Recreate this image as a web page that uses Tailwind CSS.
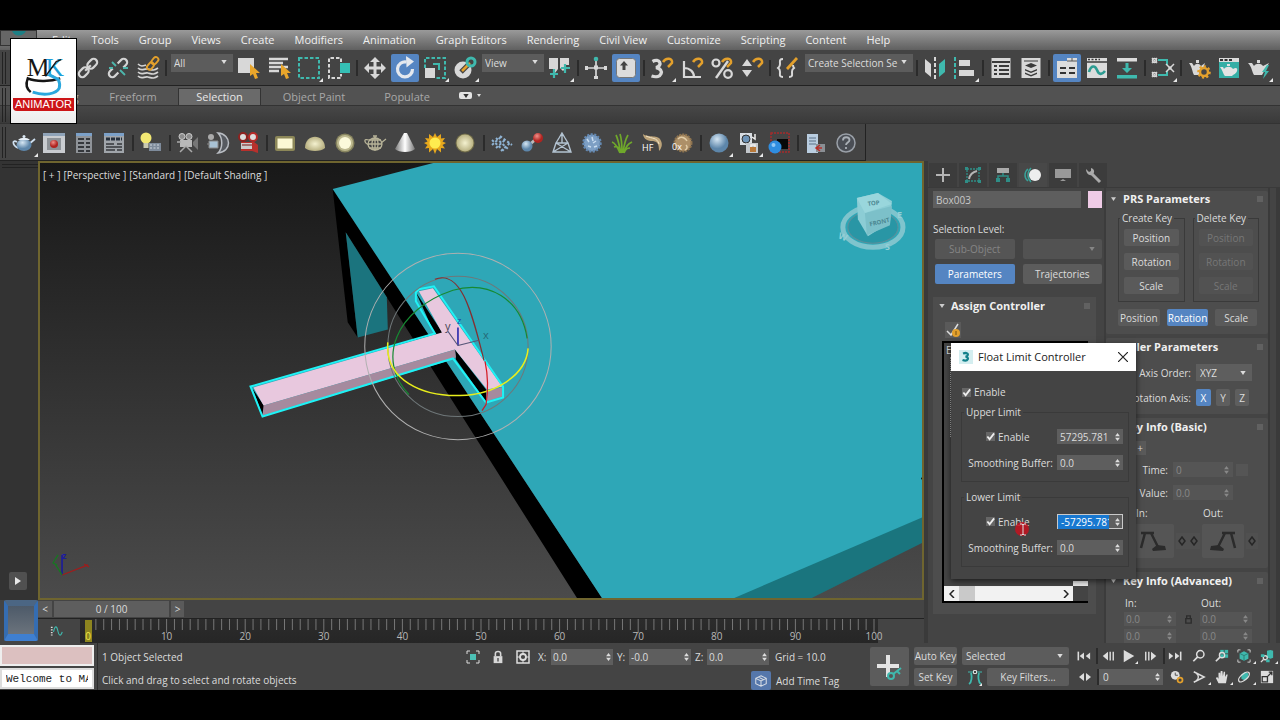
<!DOCTYPE html>
<html lang="en">
<head>
    <meta charset="UTF-8">
    <meta name="viewport" content="width=device-width, initial-scale=1.0">
    <title>Float Limit Controller</title>
    <script src="https://cdn.jsdelivr.net/npm/@tailwindcss/browser@4"></script>
</head>
<body class="bg-black">

<!-- Icon sprite -->
<svg class="absolute size-0" aria-hidden="true">
    <defs>
        <linearGradient id="sky" x1="0" y1="0" x2="0" y2="1"><stop offset="0" stop-color="#181818"/><stop offset="1" stop-color="#4b4b4b"/></linearGradient>
        <radialGradient id="blueBall" cx=".4" cy=".3"><stop offset="0" stop-color="#d5e6f3"/><stop offset="1" stop-color="#5d86aa"/></radialGradient>
        <radialGradient id="creamBall"><stop offset="0" stop-color="#f4f1cf"/><stop offset="1" stop-color="#b9b283"/></radialGradient>
        <radialGradient id="redBall" cx=".4" cy=".3"><stop offset="0" stop-color="#f0908a"/><stop offset="1" stop-color="#b02420"/></radialGradient>
        <linearGradient id="cone"><stop offset="0" stop-color="#777"/><stop offset=".5" stop-color="#fff"/><stop offset="1" stop-color="#777"/></linearGradient>
    </defs>

    <symbol id="corner" viewBox="0 0 4 4"><path d="M4 0v4H0z" fill="#e8e8e8"/></symbol>
    <symbol id="caret" viewBox="0 0 8 6"><path d="M0 0h8L4 6z" fill="currentColor"/></symbol>
    <symbol id="spin" viewBox="0 0 6 10"><path d="M0 4l3-4 3 4zM0 6l3 4 3-4z" fill="currentColor"/></symbol>
    <symbol id="tick" viewBox="0 0 10 10"><path d="M1.500 5l2.500 3L9 1.500" fill="none" stroke="#eee" stroke-width="2"/></symbol>
    <symbol id="grip" viewBox="0 0 6 6"><path d="M0 1h6M0 3h6M0 5h6" stroke="#777" stroke-width="1"/></symbol>

    <!-- main toolbar -->
    <symbol id="link" viewBox="0 0 28 28"><g transform="rotate(-45 14 14)" fill="none" stroke="#d4d4d4" stroke-width="2.200"><rect x="2.500" y="10.500" width="11" height="7" rx="3.500"/><rect x="14.500" y="10.500" width="11" height="7" rx="3.500"/><path d="M10 14h8"/></g></symbol>
    <symbol id="unlink" viewBox="0 0 28 28"><g transform="rotate(-45 14 14)" fill="none" stroke="#d4d4d4" stroke-width="2.200"><path d="M10 10.500H6a3.500 3.500 0 0 0 0 7h5M17 10.500h5a3.500 3.500 0 0 1 0 7h-4"/></g><path d="M8 8l4 4M16 16l5 5M5 14h4M19 14h5" stroke="#4db6ac" stroke-width="1.800"/></symbol>
    <symbol id="bind" viewBox="0 0 28 28"><path d="M4 14c4 4 6 0 10 1s6 2 10-1M4 18c4 4 6 0 10 1s6 2 10-1M4 22c4 4 6 0 10 1s6 2 10-1M4 10c3 3 5 2 8 1" fill="none" stroke="#d4d4d4" stroke-width="1.700"/><g transform="rotate(-50 19 9)" fill="none" stroke="#e3a02c" stroke-width="1.900"><rect x="11" y="6.500" width="8" height="5" rx="2.500"/><rect x="18" y="6.500" width="8" height="5" rx="2.500"/></g></symbol>
    <symbol id="pick" viewBox="0 0 28 28"><path d="M3 4h16v15H3z" fill="#d8d8d8"/><path d="M15 10v12l3-2 2 5 3-1-2-5h4z" fill="#e9a62b"/></symbol>
    <symbol id="pickname" viewBox="0 0 28 28"><path d="M4 5h19M4 9h14M4 13h19M4 17h10" stroke="#d8d8d8" stroke-width="2.500"/><path d="M16 10v12l3-2 2 5 3-1-2-5h4z" fill="#e9a62b"/></symbol>
    <symbol id="region" viewBox="0 0 28 28"><path d="M4 4h20v20H4z" fill="none" stroke="#3fb9ae" stroke-width="2" stroke-dasharray="3.500 2"/></symbol>
    <symbol id="crossing" viewBox="0 0 28 28"><path d="M16 8V4H4v20h12v-4" fill="none" stroke="#d8d8d8" stroke-width="2" stroke-dasharray="3.500 2"/><path d="M15 9h10v10H15z" fill="#35bfb5"/></symbol>
    <symbol id="move" viewBox="0 0 28 28"><path d="M14 3l5 5h-3.500v4.500H20V9l5 5-5 5v-3.500h-4.500V20H19l-5 5-5-5h3.500v-4.500H8V19l-5-5 5-5v3.500h4.500V8H9z" fill="#d8d8d8"/></symbol>
    <symbol id="rotate" viewBox="0 0 28 28"><path d="M21.500 15a7.500 7.500 0 1 1-6-7" fill="none" stroke="#e4e8ee" stroke-width="3.200"/><path d="M15 2l8 5.500-7.500 6z" fill="#e4e8ee"/></symbol>
    <symbol id="scale" viewBox="0 0 28 28"><path d="M4 14V4h20v20H14" fill="none" stroke="#3fb9ae" stroke-width="2" stroke-dasharray="3.500 2"/><path d="M4 14h10v10H4z" fill="#d8d8d8"/><path d="M12 10h6v6" fill="none" stroke="#3fb9ae" stroke-width="2"/></symbol>
    <symbol id="place" viewBox="0 0 28 28"><circle cx="12" cy="16" r="8.500" fill="#d8d8d8"/><path d="M10 18l9-9" stroke="#444" stroke-width="5"/><path d="M11 17l8-8" stroke="#e3a02c" stroke-width="2.500"/><circle cx="20" cy="8" r="4" fill="none" stroke="#3fb9ae" stroke-width="3"/></symbol>
    <symbol id="pivot" viewBox="0 0 28 28"><path d="M3 4h9v11l-3 4-2-4H3zM14 4h9v7h-4v4l-2 2-3-3z" fill="#d8d8d8"/><path d="M8 15v9M4 20h8M19 10v9M15 14h9" stroke="#3fb9ae" stroke-width="2.200"/></symbol>
    <symbol id="manip" viewBox="0 0 28 28"><path d="M14 4v20M4 14h20" stroke="#d8d8d8" stroke-width="1.700"/><path d="M12 11.500h4v4h-4zM3 12h3v4H3zM22 12h3v4h-3zM12 22h4v3h-4z" fill="#d8d8d8"/><circle cx="14" cy="5" r="2.300" fill="#3fb9ae"/></symbol>
    <symbol id="keyb" viewBox="0 0 28 28"><rect x="4.500" y="4.500" width="19" height="19" rx="3" fill="#dcdcdc" stroke="#777"/><path d="M12 7l4 4.500h-2.500V16h-3v-4.500H8z" fill="#444"/></symbol>
    <symbol id="snap3" viewBox="0 0 28 28"><path d="M4.500 7.500c7-4 11 4 3.500 6 9 1.500 6 12-4.500 8.500" fill="none" stroke="#d8d8d8" stroke-width="3.300"/><path d="M15 8c3-5 10-4 9 1l-4 4" fill="none" stroke="#e3a02c" stroke-width="2.500"/></symbol>
    <symbol id="snapangle" viewBox="0 0 28 28"><path d="M6 7v16h17M6 14c6 0 10 4 10 9" fill="none" stroke="#d8d8d8" stroke-width="2.200"/><path d="M15 8c3-5 10-4 9 1l-4 4" fill="none" stroke="#e3a02c" stroke-width="2.500"/></symbol>
    <symbol id="snappct" viewBox="0 0 28 28"><circle cx="8" cy="9" r="3.500" fill="none" stroke="#d8d8d8" stroke-width="2.200"/><circle cx="20" cy="20" r="3.800" fill="none" stroke="#d8d8d8" stroke-width="2.200"/><path d="M20 7L8 24" stroke="#d8d8d8" stroke-width="2.400"/><path d="M14 8c3-5 10-4 9 1l-4 4" fill="none" stroke="#e3a02c" stroke-width="2.500"/></symbol>
    <symbol id="snapspin" viewBox="0 0 28 28"><path d="M4 12l5-7 5 7zM4 16h10l-5 7z" fill="#d8d8d8"/><path d="M15 8c3-5 10-4 9 1l-4 4" fill="none" stroke="#e3a02c" stroke-width="2.500"/></symbol>
    <symbol id="sets" viewBox="0 0 28 28"><path d="M9 5c-4 0-3 2-3 5s-1 3-2 4c1 1 2 1 2 4s-1 5 3 5M15 23c4 0 3-2 3-5s1-3 2-4c-1-1-1-1-1-3" fill="none" stroke="#d8d8d8" stroke-width="2"/><path d="M13 15l10-11" stroke="#e3a02c" stroke-width="2.800"/></symbol>
    <symbol id="mirror" viewBox="0 0 28 28"><path d="M4 5l6 5v13l-6-5z" fill="#d8d8d8"/><path d="M24 5l-6 5v13l6-5z" fill="#3fb9ae"/><path d="M14 3v22" stroke="#d8d8d8" stroke-width="2" stroke-dasharray="4 2"/></symbol>
    <symbol id="align" viewBox="0 0 28 28"><path d="M4 3v22" stroke="#3fb9ae" stroke-width="2" stroke-dasharray="4 2"/><path d="M8 6h11v6H8zM8 16h15v6H8z" fill="#d8d8d8"/></symbol>
    <symbol id="explorer" viewBox="0 0 28 28"><path d="M4.500 4h19v20h-19z" fill="#d8d8d8"/><path d="M5 8h18M7 12h3M12 12h10M7 16h3M12 16h10M7 20h3M12 20h10" stroke="#3a3a3a" stroke-width="1.800"/></symbol>
    <symbol id="layers" viewBox="0 0 28 28"><path d="M4.500 4h19v20h-19z" fill="#d8d8d8"/><path d="M7 7h14" stroke="#3a3a3a"/><path d="M14 9l6 2.500-6 2.500-6-2.500zM8 15l6 2.500 6-2.500v1.500L14 19l-6-2.500zM8 18.500l6 2.500 6-2.500V20l-6 2.500L8 20z" fill="#3a3a3a"/></symbol>
    <symbol id="ribbon" viewBox="0 0 28 28"><path d="M4 7h10V4h10v20H4z" fill="#dcdcdc"/><path d="M14 7h10M19 4v3" stroke="#555"/><path d="M7 14h6M16 14h6M7 19h6M16 19h6" stroke="#333" stroke-width="2"/></symbol>
    <symbol id="curve" viewBox="0 0 28 28"><path d="M4 4h20v20H4z" fill="#dcdcdc"/><path d="M4 8h20" stroke="#3a3a3a" stroke-width="1.500"/><path d="M5 5.500h12" stroke="#3a3a3a" stroke-width="1.500" stroke-dasharray="2 1.500"/><path d="M6 18c2-7 6-7 8-2s5 5 8 1" fill="none" stroke="#2d9c92" stroke-width="2.600"/></symbol>
    <symbol id="dope" viewBox="0 0 28 28"><path d="M4 4h20v3.500H4z" fill="#dcdcdc"/><path d="M4 21h20v3.500H4zM12.500 9h3v5H19l-5 5-5-5h3.500z" fill="#3fb9ae"/></symbol>
    <symbol id="schem" viewBox="0 0 28 28"><path d="M9 6h9v5M9 21h9v-4" fill="none" stroke="#3fb9ae" stroke-width="2"/><g fill="none" stroke="#d8d8d8" stroke-width="1.500"><path d="M3 4l5 5M8 4L3 9M3 18l5 5M8 18l-5 5" stroke-dasharray="2 1"/><circle cx="5.500" cy="6.500" r="2"/><circle cx="5.500" cy="20.500" r="2"/><path d="M17 10l8 8M25 10l-8 8"/></g><path d="M19.500 12.500h3v3h-3z" fill="#d8d8d8"/></symbol>
    <symbol id="rset" viewBox="0 0 28 28"><path d="M4 9h3l2 3c2-3 5-3 7 0l4-3-4 12H9c-2-3-1-6-5-12zM11 6h3v3h-3z" fill="#d8d8d8"/><circle cx="19" cy="18" r="4" fill="#444" stroke="#e3a02c" stroke-width="2.500"/><circle cx="19" cy="18" r="5.800" fill="none" stroke="#e3a02c" stroke-width="2" stroke-dasharray="2.200 2.200"/></symbol>
    <symbol id="rframe" viewBox="0 0 28 28"><path d="M4 4h20v20H4z" fill="#35aea5"/><path d="M4 4h20v4H4z" fill="#dcdcdc"/><path d="M5 6h12" stroke="#333" stroke-width="2" stroke-dasharray="3 1.500"/><path d="M5 13h3l1 2c2-3 7-3 9 0 3-2 5-1 4 2s-3 3-5 5h-7c-2-2-2-5-5-9zM12 10h3v2h-3z" fill="#e3e3e3"/></symbol>
    <symbol id="rprod" viewBox="0 0 28 28"><path d="M3 9h4l2 3c2-3 7-3 9 0l6-3-7 12H9C7 18 7 13 3 9zM12 6h3v3h-3z" fill="#d8d8d8"/><path d="M22 11l-5 7h3l-2 7 6-8h-3l3-6z" fill="#3fb9ae"/></symbol>

    <!-- second toolbar -->
    <symbol id="teapot" viewBox="0 0 28 28"><path d="M7 13c-5-3-5 3 1 6M19 15l6-5" fill="none" stroke="#cfe0f0" stroke-width="1.800"/><ellipse cx="14" cy="16" rx="7.500" ry="6" fill="url(#blueBall)"/><path d="M8 11c3-3 9-3 12 0z" fill="#e8f0f7"/><circle cx="14" cy="7.500" r="1.500" fill="#dce8f3"/></symbol>
    <symbol id="rwin" viewBox="0 0 28 28"><path d="M3 4h22v20H3z" fill="#c9ccd0"/><path d="M3 4h22v3H3z" fill="#8fa3b8"/><path d="M7 9h14v12H7z" fill="#8d9297"/><circle cx="14" cy="15" r="4" fill="url(#redBall)"/></symbol>
    <symbol id="panel1" viewBox="0 0 28 28"><path d="M6 4h16v20H6z" fill="#8f9398"/><path d="M6 4h16v3H6z" fill="#7ba0c8"/><path d="M8 10h6M8 14h6M8 18h6M8 22h6M16 10h4M16 14h4M16 18h4M16 22h4" stroke="#34373b" stroke-width="1.800"/></symbol>
    <symbol id="panel2" viewBox="0 0 28 28"><path d="M4 4h20v20H4z" fill="#a0a5aa"/><path d="M4 4h20v3H4z" fill="#7ba0c8"/><path d="M6 10h16" stroke="#26303c" stroke-width="3" stroke-dasharray="4 1"/><path d="M6 15h8M6 18h16M6 21h9M17 15h5M17 21h5" stroke="#34373b" stroke-width="1.500"/></symbol>
    <symbol id="bulb" viewBox="0 0 28 28"><circle cx="9" cy="9" r="5.500" fill="#f2e873"/><path d="M6.500 14h5v5h-5z" fill="#c9c9b0"/><path d="M12 14h12v8H12z" fill="#7e8b9b"/><path d="M13 16h10M13 19h10" stroke="#cfd6de" stroke-dasharray="2 1.500"/></symbol>
    <symbol id="camera" viewBox="0 0 28 28"><g fill="#8c8c8c" stroke="#ccc"><circle cx="8" cy="7.500" r="3"/><circle cx="15" cy="7.500" r="3"/></g><path d="M6 11h12v7H6z" fill="#b9b9b9"/><path d="M19 13l5-5v13l-5-5z" fill="#777"/><path d="M12 17l-6 6M12 17l6 6M3 13h4" stroke="#aaa" stroke-width="1.500"/></symbol>
    <symbol id="halfcam" viewBox="0 0 28 28"><circle cx="7" cy="8" r="3" fill="#aaa"/><path d="M5 12h9v7H5zM3 15h3" fill="#a9c2d4" stroke="#888"/><path d="M14 4c14 1 14 19 0 20 5-5 5-15 0-20z" fill="#565a60" stroke="#b9bdc3" stroke-width="1.500"/></symbol>
    <symbol id="redcam" viewBox="0 0 28 28"><circle cx="9" cy="8" r="4" fill="#ddd" stroke="#8f2220" stroke-width="2"/><circle cx="19" cy="8" r="4" fill="#ddd" stroke="#b52a28" stroke-width="2"/><path d="M7 13h13l4 3v8l-6-2H7z" fill="#b8302c"/><path d="M7 14h11v6H7z" fill="#ccc"/><path d="M8 16h10" stroke="#7a1513"/></symbol>
    <symbol id="lrect" viewBox="0 0 28 28"><rect x="4" y="7" width="20" height="15" rx="2" fill="#8c8758"/><rect x="6.500" y="9.500" width="15" height="10" fill="#fbf8d4"/></symbol>
    <symbol id="ldome" viewBox="0 0 28 28"><path d="M4 19C4 4 24 4 24 19c-4 4-16 4-20 0z" fill="url(#creamBall)"/></symbol>
    <symbol id="lball" viewBox="0 0 28 28"><circle cx="14" cy="14" r="9.500" fill="#87845f"/><circle cx="14" cy="14" r="8" fill="#bdb98f"/><circle cx="14" cy="14" r="6" fill="#fcfadb"/></symbol>
    <symbol id="mesh" viewBox="0 0 28 28"><g fill="none" stroke="#b7b398" stroke-width="1.300"><ellipse cx="14" cy="15" rx="7" ry="6"/><ellipse cx="14" cy="15" rx="3" ry="6"/><path d="M14 7v14M7 15h14M8 11h12M8 19h12M8 11c-6-2-5 3 0 5M20 14l5-4M12 7h4"/></g></symbol>
    <symbol id="lcone" viewBox="0 0 28 28"><path d="M13 4h3l8 16c-4 4-16 4-20 0z" fill="url(#cone)"/></symbol>
    <symbol id="sun" viewBox="0 0 28 28"><path d="M14 4l2 4 4-3v4.500l4-.5-2.500 3.500L25 14l-3.500 2 2.500 3.500-4-.5v4.500L16 20l-2 5-2-5-4 3.500V19l-4 .5L6.500 16 3 14l3.500-1.500L4 9l4 .5V5l4 3z" fill="#e7a81d"/><circle cx="14" cy="14" r="5.500" fill="#ffec4f"/></symbol>
    <symbol id="cream" viewBox="0 0 28 28"><circle cx="14" cy="14" r="9.500" fill="#6e6a48"/><circle cx="14" cy="14" r="8.500" fill="url(#creamBall)"/></symbol>
    <symbol id="scatter" viewBox="0 0 28 28"><path d="M4 11l12 11M8 9l12 11M12 7l12 9M4 16l10-9M8 19l10-9M13 22l10-9" stroke="#8fb3d3" stroke-width="2" stroke-dasharray="2.500 2"/></symbol>
    <symbol id="atoms" viewBox="0 0 28 28"><path d="M9 18l10-9" stroke="#bbb" stroke-width="3"/><circle cx="9" cy="17" r="5.500" fill="url(#blueBall)"/><circle cx="20" cy="9" r="5" fill="url(#redBall)"/></symbol>
    <symbol id="pyramid" viewBox="0 0 28 28"><path d="M5 23h18L20 14H8zM14 4L8 14M14 4l6 10M14 4v10M5 23l15-9M23 23L8 14M11 9l3-5 3 5" fill="none" stroke="#b3c3d1" stroke-width="1.400"/></symbol>
    <symbol id="fuzz" viewBox="0 0 28 28"><circle cx="14" cy="14" r="8.500" fill="#7d9fc4" stroke="#6489b2" stroke-width="2.500" stroke-dasharray="2 1.500"/><path d="M9 10l2 3M14 8l1 4M18 12l-3 2M10 17l3 1M16 18l3-1" stroke="#c8dcf0" stroke-width="1.500"/></symbol>
    <symbol id="grass" viewBox="0 0 28 28"><path d="M12 24C9 17 7 14 4 13M13 24C11 15 10 10 8 6M14 24c0-9 0-13-2-19M15 24c1-8 2-13 5-18M16 24c2-7 4-9 8-11M14 24c-2-5-5-7-8-6M16 24c2-5 4-5 6-5" fill="none" stroke="#6fa82b" stroke-width="1.700"/></symbol>
    <symbol id="hair" viewBox="0 0 28 28"><path d="M5 5c5 4 16 0 18 7 2 4 0 8-2 10 0-8-2-10-8-10C8 12 5 8 5 5z" fill="#bda47a"/><path d="M8 7c6 3 11 1 13 8" fill="none" stroke="#f1e3c5"/><text x="4" y="22" font-family="Open Sans" font-size="9" fill="#fff">HF</text></symbol>
    <symbol id="fur" viewBox="0 0 28 28"><circle cx="15" cy="14" r="8.500" fill="#ad9068" stroke="#8d734f" stroke-width="2" stroke-dasharray="2 1"/><path d="M10 10c4-4 8 0 9 2M18 16c2 2 1 4-1 5" fill="none" stroke="#e2cda7" stroke-width="1.500"/><text x="4" y="21" font-family="Open Sans" font-size="9" fill="#fff">0x</text></symbol>
    <symbol id="ball" viewBox="0 0 28 28"><circle cx="14" cy="14" r="9.500" fill="url(#blueBall)"/></symbol>
    <symbol id="locks" viewBox="0 0 28 28"><path d="M5 4h12v12H5z" fill="#d8dde2"/><circle cx="11" cy="10" r="4" fill="#6d93b7" stroke="#333"/><path d="M11 14h12v10H11z" fill="#c3c7cb"/><path d="M15 18h6v5h-6z" fill="#b8793a"/><path d="M20 5v5l-3-2M16 18v-2h4v2" fill="none" stroke="#eee" stroke-width="1.500"/></symbol>
    <symbol id="proxy" viewBox="0 0 28 28"><path d="M12 10h11v10H12z" fill="#080808"/><path d="M6 4h18v19H6z" fill="none" stroke="#a52b2b" stroke-width="1.500" stroke-dasharray="2 1"/><circle cx="10" cy="18" r="6.500" fill="#2f8de0"/><circle cx="8.500" cy="16" r="2" fill="#8ec6f5"/></symbol>
    <symbol id="doc" viewBox="0 0 28 28"><path d="M5 5h11v19H5z" fill="#b9cde0"/><path d="M7 9h7M7 12h7M7 15h7" stroke="#5b7188"/><path d="M14 15h9v8h-9z" fill="#8a8f94"/><path d="M14 19h6M18 16l-4 3 4 3" fill="none" stroke="#b5302c" stroke-width="1.500"/></symbol>
    <symbol id="help" viewBox="0 0 28 28"><circle cx="14" cy="14" r="9" fill="#4a4e55" stroke="#9aa0a8" stroke-width="1.500"/><path d="M11 11.500c0-4.500 6.500-4 6.500-.5 0 2.500-3.500 2.500-3.500 5M14 18v2" fill="none" stroke="#a9afb6" stroke-width="1.800"/></symbol>

    <!-- command panel tabs -->
    <symbol id="t-plus" viewBox="0 0 20 20"><path d="M10 3v14M3 10h14" stroke="#b5b5b5" stroke-width="2"/></symbol>
    <symbol id="t-mod" viewBox="0 0 20 20"><path d="M4 4h12v12H4z" fill="none" stroke="#2f8e87" stroke-width="1.300" stroke-dasharray="2 1"/><path d="M2 2h3v3H2zM15 2h3v3h-3zM2 15h3v3H2zM15 15h3v3h-3z" fill="#2f8e87"/><path d="M6 14c1-5 4-7 8-8" fill="none" stroke="#b5b5b5" stroke-width="2"/></symbol>
    <symbol id="t-hier" viewBox="0 0 20 20"><path d="M4 3h12v5H4z" fill="#aaa"/><path d="M10 8v3M5 14v-3h10v3" fill="none" stroke="#2f8e87" stroke-width="1.500"/><path d="M3 13h4v4H3zM13 13h4v4h-4z" fill="#2f8e87"/></symbol>
    <symbol id="t-motion" viewBox="0 0 20 20"><path d="M5 4c-4 3-4 9 0 12M8 3c-4 4-4 10 0 14" fill="none" stroke="#39a198" stroke-width="1.500"/><circle cx="12" cy="10" r="6" fill="#eee"/></symbol>
    <symbol id="t-disp" viewBox="0 0 20 20"><path d="M2 4h16v9H2zM7 16h6l-3-2z" fill="#999"/></symbol>
    <symbol id="t-util" viewBox="0 0 20 20"><path d="M9 9l8 8" stroke="#aaa" stroke-width="3"/><path d="M3 4l3 3 2-1 0-3C12 4 12 8 9 10 6 11 3 8 3 4z" fill="#aaa"/></symbol>

    <!-- status bar -->
    <symbol id="isolate" viewBox="0 0 16 16"><path d="M2 5V2h3M11 2h3v3M14 11v3h-3M5 14H2v-3" fill="none" stroke="#ddd"/><path d="M5 5h6v6H5z" fill="#4cc0b5"/></symbol>
    <symbol id="lock" viewBox="0 0 16 16"><path d="M3 7h10v8H3z" fill="#d8d8d8"/><path d="M5 7V4c0-3 6-3 6 0v3" fill="none" stroke="#d8d8d8" stroke-width="1.800"/><path d="M8 9v4" stroke="#444" stroke-width="1.500"/></symbol>
    <symbol id="absrel" viewBox="0 0 16 16"><path d="M2 2h12v12H2z" fill="none" stroke="#ddd" stroke-width="1.500"/><circle cx="8" cy="8" r="3" fill="none" stroke="#ddd" stroke-width="1.800"/><path d="M8 2v3M8 11v3M2 8h3M11 8h3" stroke="#ddd"/></symbol>
    <symbol id="tag" viewBox="0 0 16 16"><path d="M8 2l6 3v6l-6 3-6-3V5zM2 5l6 3 6-3M8 8v6M5 3.500l6 3" fill="none" stroke="#d5dbe4" stroke-width="1.200"/></symbol>
    <symbol id="bigkey" viewBox="0 0 32 32"><path d="M14 4v22M3 15h22" stroke="#e4e4e4" stroke-width="4"/><path d="M18 24l9-7M23 20l3 3" stroke="#3fb9ae" stroke-width="2"/><circle cx="17" cy="25" r="3" fill="#555" stroke="#3fb9ae" stroke-width="2"/></symbol>
    <symbol id="tangent" viewBox="0 0 16 16"><path d="M2 15c3-2 3-8 2-11M14 15c-3-2-3-8-2-11" fill="none" stroke="#3fb9ae" stroke-width="1.800"/><path d="M1 3h5M10 3h5" stroke="#3fb9ae"/><path d="M6.500 1.500h3v3h-3z" fill="none" stroke="#ddd"/></symbol>
    <symbol id="first" viewBox="0 0 16 16"><path d="M1.500 3v10" stroke="#ddd" stroke-width="1.800"/><path d="M8 4v8L3 8zM15 4v8l-5-4z" fill="#ddd"/></symbol>
    <symbol id="prev" viewBox="0 0 16 16"><path d="M8 3v10L2 8z" fill="#ddd"/><path d="M10.500 3v10M14 3v10" stroke="#ddd" stroke-width="1.600"/></symbol>
    <symbol id="play" viewBox="0 0 16 16"><path d="M2 1l12 7-12 7z" fill="#ddd"/></symbol>
    <symbol id="keymode" viewBox="0 0 16 16"><path d="M7 4v8L2 8zM9 4v8l5-4z" fill="#ddd"/></symbol>
    <symbol id="clock" viewBox="0 0 16 16"><circle cx="6" cy="6" r="5" fill="#ddd"/><path d="M6 3v3h3" fill="none" stroke="#444"/><circle cx="11.500" cy="11.500" r="2.800" fill="#444" stroke="#e3a02c" stroke-width="2"/></symbol>
    <symbol id="zoom" viewBox="0 0 16 16"><circle cx="9.500" cy="6" r="4.200" fill="none" stroke="#ddd" stroke-width="1.700"/><path d="M6.500 9L1.500 14" stroke="#ddd" stroke-width="2"/></symbol>
    <symbol id="zoomall" viewBox="0 0 16 16"><path d="M6 1h9v9H6z" fill="#3fb9ae"/><path d="M10.500 1v9M6 5.500h9" stroke="#444"/><circle cx="8" cy="7" r="3" fill="none" stroke="#ddd" stroke-width="1.500"/><path d="M6 9l-5 5" stroke="#ddd" stroke-width="2"/></symbol>
    <symbol id="zext" viewBox="0 0 16 16"><path d="M1 4V1h3M12 1h3v3M15 12v3h-3M4 15H1v-3" fill="none" stroke="#ddd"/><path d="M8 2.500l5 2.500v6l-5 2.500L3 11V5z" fill="#3fb9ae"/><path d="M3 5l5 2.500L13 5M8 7.500v6" fill="none" stroke="#2a7771"/></symbol>
    <symbol id="zextall" viewBox="0 0 16 16"><path d="M8 2l4-1 3 1v8l-3 1-4-1z" fill="#3fb9ae"/><circle cx="6" cy="10" r="2.300" fill="none" stroke="#ddd" stroke-width="1.500"/><path d="M4 12l-3 3" stroke="#ddd" stroke-width="1.500"/><path d="M1 6h4v3H1zM7 12h4v3H7z" fill="#3fb9ae"/></symbol>
    <symbol id="fov" viewBox="0 0 16 16"><path d="M2 2l12 6-12 6M5 4c3 2 3 6 0 8" fill="none" stroke="#ddd" stroke-width="1.600"/></symbol>
    <symbol id="pan" viewBox="0 0 16 16"><path d="M4 15L1 9l1.500-1L4 10V3h2v4l.5-6h2L9 7l1-5h1.500v6L13 5h1.500l-2 10z" fill="#ddd"/></symbol>
    <symbol id="orbit" viewBox="0 0 16 16"><path d="M5 5l4-3 4 2v5l-4 3-4-2z" fill="#3fb9ae"/><ellipse cx="8" cy="8" rx="7.500" ry="3.500" transform="rotate(-40 8 8)" fill="none" stroke="#ddd" stroke-width="1.500"/></symbol>
    <symbol id="maxi" viewBox="0 0 16 16"><path d="M1 1h14v14H1z" fill="#ddd"/><path d="M2.500 7.500h6v6h-6zM9 7l5-5M10 2.500h3.500V6" fill="none" stroke="#333" stroke-width="1.500"/></symbol>
    <symbol id="mini" viewBox="0 0 16 16"><path d="M2 3v10" stroke="#ddd" stroke-width="2" stroke-dasharray="1.500 1.500"/><path d="M4 9c2-9 4-6 5-1s3 7 5 1" fill="none" stroke="#3fb9ae" stroke-width="1.300"/></symbol>
    <symbol id="ease" viewBox="0 0 30 24"><path d="M3 4h13M7 4L3 19M13 4l7 14" fill="none" stroke="#2b2b2b" stroke-width="2.500"/><path d="M14 20l5-4 8 1 1 4-13 1z" fill="#2b2b2b"/></symbol>
    <symbol id="diamond" viewBox="0 0 10 10"><path d="M5 1l3 4-3 4-3-4z" fill="none" stroke="#262626" stroke-width="1.500"/></symbol>
</svg>

<div class="flex h-screen flex-col overflow-hidden bg-black py-[30px] font-['Open_Sans','Noto_Sans',sans-serif] text-[10px] leading-[14px] text-[#dcdcdc]">
<div class="relative flex min-h-0 flex-1 flex-col bg-[#444]">

    <!-- Menu bar -->
    <nav class="flex h-5 shrink-0 items-center gap-5 bg-linear-to-b from-[#9a9a9a] to-[#606060] pl-[52px] text-[11px] whitespace-nowrap text-[#f0f0f0]">
        <a href="#">Edit</a><a href="#">Tools</a><a href="#">Group</a><a href="#">Views</a><a href="#">Create</a><a href="#">Modifiers</a><a href="#">Animation</a><a href="#">Graph Editors</a><a href="#">Rendering</a><a href="#">Civil View</a><a href="#">Customize</a><a href="#">Scripting</a><a href="#">Content</a><a href="#">Help</a>
    </nav>

    <!-- Main toolbar -->
    <div id="toolbar" class="flex h-9 shrink-0 items-center border-b border-[#222] bg-[#444] pl-[73px]"></div>

    <!-- Ribbon -->
    <div class="flex h-5 shrink-0 items-end border-b border-[#333] bg-[#525252] pl-7 text-[11px] text-[#a8a8a8]">
        <button class="h-[17px] w-[54px]">Modeling</button>
        <button class="ml-2 h-[17px] w-[86px]">Freeform</button>
        <button class="ml-[2px] h-[17px] w-[83px] border border-b-0 border-[#333] bg-[#6a6a6a] text-[#e8e8e8]">Selection</button>
        <button class="h-[17px] w-[106px]">Object Paint</button>
        <button class="h-[17px] w-[80px]">Populate</button>
        <button aria-label="Ribbon options" class="mb-[6px] ml-3 grid h-[7px] w-[13px] place-items-center rounded-xs bg-[#e4e4e4] text-[#333]"><svg class="h-1 w-[6px]"><use href="#caret"/></svg></button>
        <svg class="mb-2 ml-[5px] h-[3px] w-1 text-[#ddd]"><use href="#caret"/></svg>
    </div>
    <div class="h-[18px] shrink-0 border-b border-[#333] bg-linear-to-b from-[#474747] to-[#3a3a3a]"></div>

    <!-- Extras toolbar -->
    <div class="flex h-[37px] shrink-0 bg-[#444]">
        <div id="extras" class="flex items-center border-r border-b border-[#222] pt-[2px] pr-1 pl-[9px]"></div>
    </div>

    <div class="flex min-h-0 flex-1">
        <!-- Left rail -->
        <div class="flex w-[38px] shrink-0 flex-col items-end bg-[#333]">
            <div class="mt-[3px] h-1 w-9 border-y border-[#222]"></div>
            <div class="flex-1"></div>
            <button aria-label="Expand" class="mr-[11px] mb-[10px] grid size-[18px] place-items-center rounded-xs bg-[#505050] text-[#e8e8e8]"><svg class="h-[6px] w-2 -rotate-90"><use href="#caret"/></svg></button>
            <div class="flex h-[43px] w-full justify-end bg-[#444]"><button aria-label="Layout" class="h-[41px] w-[34px] rounded-xs border-x-4 border-t-[6px] border-b-[7px] border-x-[#356db2] border-t-[#4b6684] border-b-[#3f7fd0] bg-linear-to-b from-[#4d5a69] to-[#6b737c]"></button></div>
        </div>

        <div class="flex min-w-0 flex-1 flex-col">
            <!-- Viewport -->
            <div class="relative min-h-0 flex-1 border-2 border-[#6f652f]">
                <svg viewBox="40 164 884 434" preserveAspectRatio="xMinYMin slice" class="absolute inset-0 size-full">
                    <rect x="38" y="162" width="886" height="438" fill="url(#sky)"/>
                    <path d="M332 190L602 600H577L386 298 345 233 357 338 347 323z" fill="#000"/>
                    <path d="M345 233L386 298 387 330 357 338z" fill="#1b747e"/>
                    <path d="M332 190L440 162H924V518L730 600H602z" fill="#2ea7b7"/>
                    <path d="M924 516V541L806 600H728z" fill="#1a757e"/>
                    <path d="M924 470l-5 9 5 5z" fill="#000"/>
                    <!-- T-shaped handle -->
                    <path d="M250 387L440 333 415 302V293L418 290 433 287 502 387V398L485 403 455 359 262 417z" fill="#2ea7b7"/>
                    <path d="M415 293L442 334 434 335zM454 350L485 390V402L455 360zM252 389L264 407 262 416z" fill="#000"/>
                    <path d="M253 388L441 333 418 292 432 289 501 387 486 390 454 350 263 406z" fill="#e8c8de"/>
                    <path d="M263 406L454 350 455 358 262 416zM486 391L501 388V397L485 402z" fill="#a58a9e"/>
                    <path d="M250 387L434 334 415 302V293L418 290 433 287 502 387V398L485 403 452 359 262 417z" fill="none" stroke="#1ff2f5" stroke-width="2"/>
                    <!-- Rotate gizmo -->
                    <g fill="none">
                        <circle cx="457" cy="347" r="93" stroke="#b0b0b0"/>
                        <circle cx="457" cy="347" r="70" stroke="#6f7779"/>
                        <path d="M408 395C375 360 395 310 452 291c35-10 68 8 74 48" stroke="#168a32" stroke-width="1.200"/>
                        <path d="M387 343c-3 38 35 54 72 53 35-1 66-20 68-47" stroke="#e8ee1c" stroke-width="1.500"/>
                        <path d="M434 280c12-5 22 3 29 17 8 16 14 40 20 64" stroke="#852f31" stroke-width="1.200"/>
                        <path d="M484 362c3 14 3 30 1 43l-4 6" stroke="#d41620" stroke-width="1.200"/>
                        <path d="M457 346V328" stroke="#1c1ca8" stroke-width="1.500"/>
                        <path d="M457 346l-10-14M457 346l20-5" stroke="#555577"/>
                    </g>
                    <g font-family="Open Sans" font-size="11"><text x="444" y="331" fill="#445">y</text><text x="482" y="340" fill="#276a76">x</text><text x="456" y="325" font-size="9" fill="#1c3ca8">z</text></g>
                    <!-- World axis -->
                    <g fill="none"><path d="M62 575V555" stroke="#1818a0" stroke-width="1.500"/><path d="M62 575l26-10M84 564l5 3" stroke="#a01c1c" stroke-width="1.200"/><path d="M62 575l-7-11M58 555l-5 8 4 2" stroke="#157a20" stroke-width="1.200"/></g>
                    <text x="62" y="559" font-family="Open Sans" font-size="9" font-weight="700" fill="#1c1ca0">z</text>
                    <!-- View cube -->
                    <ellipse cx="871" cy="228" rx="30" ry="20" fill="none" stroke="#7fc4cd" stroke-width="5"/>
                    <ellipse cx="871" cy="228" rx="25" ry="16" fill="#2996a5" stroke="#5b8f9b"/>
                    <path d="M855 199L876 194 890 202 888 223 866 237 856 220z" fill="#8ccdd5"/>
                    <path d="M863 214L890 207 888 226 865 236z" fill="#7cc0c9"/>
                    <path d="M855 199L876 194 890 205 863 214z" fill="#99d6dc"/>
                    <g font-family="Open Sans" font-weight="700" fill="#4b8791" font-size="6"><text x="866" y="207" transform="rotate(-8 866 207)">TOP</text><text x="868" y="227" transform="rotate(-12 868 227)">FRONT</text></g>
                    <g font-family="Open Sans" font-weight="700" fill="#94cfd6" font-size="9"><text x="836" y="239" transform="rotate(20 836 239)">W</text><text x="883" y="251">S</text><text x="895" y="219">E</text></g>
                </svg>
                <div class="absolute top-[5px] left-[3px] flex gap-[3px] text-[#dcdcdc]"><span>[ + ]</span><span>[Perspective ]</span><span>[Standard ]</span><span>[Default Shading ]</span></div>
            </div>

            <!-- Time slider -->
            <div class="flex h-[18px] shrink-0 items-center gap-[2px] bg-[#444]">
                <button class="h-4 w-[14px] bg-[#5a5a5a]" aria-label="Previous frame">&lt;</button>
                <button class="h-4 w-[115px] bg-[#5e5e5e]">0 / 100</button>
                <button class="h-4 w-[13px] bg-[#5a5a5a]" aria-label="Next frame">&gt;</button>
            </div>
            <!-- Track bar -->
            <div class="flex h-[25px] shrink-0 border-t border-[#222] bg-[#444]">
                <div class="grid w-[38px] shrink-0 place-items-center"><svg class="size-[14px]"><use href="#mini"/></svg></div>
                <div class="ml-1 min-w-0 flex-1 bg-linear-to-b from-[#2c2c2c] to-[#262626] pr-1 pl-2"><svg id="track" class="h-6 w-full overflow-visible"></svg></div>
                <div class="w-[46px]"></div>
            </div>
        </div>

        <!-- Command panel -->
        <div class="relative flex w-[356px] shrink-0 flex-col overflow-hidden border-l-4 border-[#3a3a3a]">
            <div id="tabs" class="mt-[2px] flex h-[25px] shrink-0 gap-[2px] border-b border-[#3a3a3a] pl-[1px]"></div>
            <div class="flex min-h-0 flex-1">
                <div class="w-[178px] shrink-0 border-r-2 border-[#3c3c3c] pt-[3px] pl-[5px]">
                    <div class="flex gap-[7px]">
                        <input aria-label="Object name" value="Box003" class="h-[17px] w-[148px] bg-[#5e5e5e] px-[3px] text-[#c8c8c8]">
                        <button aria-label="Object color" class="h-[17px] w-[14px] bg-[#efcbe6]"></button>
                    </div>
                    <p class="mt-[14px]">Selection Level:</p>
                    <div class="mt-[3px] grid w-[169px] grid-cols-2 gap-x-2 gap-y-[5px] pl-[2px]">
                        <button disabled class="h-5 rounded-xs bg-[#555] text-[#858585]">Sub-Object</button>
                        <div class="relative"><select disabled aria-label="Sub-object level" class="h-5 w-full appearance-none rounded-xs bg-[#525252]"><option></option></select><svg class="absolute top-2 right-[7px] h-1 w-[6px] text-[#858585]"><use href="#caret"/></svg></div>
                        <button class="h-5 rounded-xs bg-[#5585c2] text-white">Parameters</button>
                        <button class="h-5 rounded-xs bg-[#5c5c5c]">Trajectories</button>
                    </div>
                    <section class="mt-[13px] h-[317px] w-[163px] bg-[#4d4d4d]">
                        <h2 class="flex items-center gap-[6px] px-[6px] pt-[2px] text-[11px] font-bold text-[#f0f0f0]"><svg class="h-1 w-[6px] text-[#ccc]"><use href="#caret"/></svg>Assign Controller<svg class="ml-auto size-[6px] rotate-90"><use href="#grip"/></svg></h2>
                        <button aria-label="Assign controller" class="mt-[9px] ml-3 block size-4 bg-[#5a5a5a]"><svg viewBox="0 0 16 16"><path d="M2 9l4 4L13 2" fill="none" stroke="#ddd" stroke-width="1.500"/><circle cx="11" cy="11" r="4" fill="#e3a02c"/><path d="M11 9v4" stroke="#73500f"/></svg></button>
                        <div class="mt-[3px] ml-[9px] flex h-[262px] w-[146px] flex-col justify-end border-2 border-r-0 border-black bg-[#444]">
                            <div class="flex-1 overflow-hidden pl-[2px]">E<div class="ml-1 h-20 border-l border-dotted border-[#aaa]"></div></div>
                            <div class="ml-auto h-[5px] w-[15px] bg-[#e8e8e8]"></div>
                            <div class="flex h-[15px] w-[129px] items-center bg-[#f2f2f2]">
                                <button aria-label="Scroll left" class="grid size-[15px] place-items-center"><svg viewBox="0 0 6 8" class="h-2 w-[6px]"><path d="M5 0L1 4l4 4" fill="none" stroke="#222" stroke-width="1.500"/></svg></button>
                                <div class="h-full w-4 bg-[#c9c9c9]"></div>
                                <button aria-label="Scroll right" class="ml-auto grid size-[15px] place-items-center"><svg viewBox="0 0 6 8" class="h-2 w-[6px]"><path d="M1 0l4 4-4 4" fill="none" stroke="#222" stroke-width="1.500"/></svg></button>
                            </div>
                        </div>
                    </section>
                </div>

                <div class="flex min-w-0 flex-1 flex-col gap-1 overflow-hidden pt-[3px]">
                    <section class="shrink-0 rounded-xs bg-[#4d4d4d] pb-2">
                        <h2 class="flex items-center gap-[7px] px-[5px] text-[11px] leading-4 font-bold text-[#f0f0f0]"><svg class="h-1 w-[5px] text-[#ccc]"><use href="#caret"/></svg>PRS Parameters<svg class="ml-auto size-[6px]"><use href="#grip"/></svg></h2>
                        <div class="mt-1 grid grid-cols-2 gap-2 px-3 pr-[9px]">
                            <fieldset class="h-[91px] border border-[#3a3a3a] px-[5px] pt-1 whitespace-nowrap"><legend class="-ml-[4px] px-[2px]">Create Key</legend>
                                <button class="mb-[7px] block h-[17px] w-full rounded-xs bg-[#5a5a5a]">Position</button><button class="mb-[7px] block h-[17px] w-full rounded-xs bg-[#5a5a5a]">Rotation</button><button class="block h-[17px] w-full rounded-xs bg-[#5a5a5a]">Scale</button>
                            </fieldset>
                            <fieldset class="h-[91px] border border-[#3a3a3a] px-[5px] pt-1 whitespace-nowrap text-[#777]"><legend class="-ml-[4px] px-[2px] text-[#dcdcdc]">Delete Key</legend>
                                <button disabled class="mb-[7px] block h-[17px] w-full rounded-xs bg-[#525252]">Position</button><button disabled class="mb-[7px] block h-[17px] w-full rounded-xs bg-[#525252]">Rotation</button><button disabled class="block h-[17px] w-full rounded-xs bg-[#525252]">Scale</button>
                            </fieldset>
                        </div>
                        <div class="mt-[7px] grid grid-cols-3 gap-[7px] pr-[11px] pl-3">
                            <button class="h-[17px] rounded-xs bg-[#5a5a5a]">Position</button><button class="h-[17px] rounded-xs bg-[#5585c2] text-white">Rotation</button><button class="h-[17px] rounded-xs bg-[#5a5a5a]">Scale</button>
                        </div>
                    </section>

                    <section class="shrink-0 rounded-xs bg-[#4d4d4d] pb-2">
                        <h2 class="flex items-center gap-[7px] px-[5px] text-[11px] leading-[18px] font-bold text-[#f0f0f0]"><svg class="h-1 w-[5px] text-[#ccc]"><use href="#caret"/></svg>Euler Parameters<svg class="ml-auto size-[6px]"><use href="#grip"/></svg></h2>
                        <div class="mt-2 flex items-center">
                            <label for="order" class="w-[90px] pr-[5px] text-right">Axis Order:</label>
                            <div class="relative w-14"><select id="order" class="h-[17px] w-full appearance-none bg-[#5e5e5e] px-1"><option>XYZ</option></select><svg class="absolute top-[7px] right-[6px] h-1 w-[6px]"><use href="#caret"/></svg></div>
                        </div>
                        <div class="mt-2 flex items-center gap-[5px]">
                            <span class="w-[85px] text-right whitespace-nowrap">Rotation Axis:</span>
                            <button class="h-[17px] w-[15px] rounded-xs bg-[#5585c2] text-white">X</button><button class="h-[17px] w-[14px] rounded-xs bg-[#5e5e5e]">Y</button><button class="h-[17px] w-[14px] rounded-xs bg-[#5e5e5e]">Z</button>
                        </div>
                    </section>

                    <section class="shrink-0 rounded-xs bg-[#4d4d4d] pb-[10px]">
                        <h2 class="flex items-center gap-[7px] px-[5px] text-[11px] leading-[18px] font-bold text-[#f0f0f0]"><svg class="h-1 w-[5px] text-[#ccc]"><use href="#caret"/></svg>Key Info (Basic)<svg class="ml-auto size-[6px]"><use href="#grip"/></svg></h2>
                        <button class="mt-[5px] ml-7 block h-[14px] w-3 bg-[#5a5a5a]" aria-label="Next key">+</button>
                        <div class="mt-[7px] flex items-center"><label for="ktime" class="w-[67px] pr-[5px] text-right">Time:</label><span class="flex h-[15px] w-[60px] items-center bg-[#555] pr-1 text-[#888]"><input id="ktime" value="0" class="min-w-0 flex-1 px-[3px]"><svg class="h-2 w-[5px]"><use href="#spin"/></svg></span><button aria-label="Lock time" class="ml-[3px] size-3 bg-[#555]"></button></div>
                        <div class="mt-2 flex items-center"><label for="kval" class="w-[67px] pr-[5px] text-right">Value:</label><span class="flex h-[15px] w-[60px] items-center bg-[#555] pr-1 text-[#888]"><input id="kval" value="0.0" class="min-w-0 flex-1 px-[3px]"><svg class="h-2 w-[5px]"><use href="#spin"/></svg></span></div>
                        <div class="mt-[6px] flex pl-[30px]"><span class="w-[67px]">In:</span><span>Out:</span></div>
                        <div class="mt-1 flex items-center pl-[26px]">
                            <button aria-label="In tangent" class="grid h-[34px] w-[42px] place-items-center rounded-xs bg-[#555]"><svg class="h-6 w-[30px]"><use href="#ease"/></svg></button>
                            <button aria-label="Previous in" class="ml-[2px] grid h-4 w-3 place-items-center bg-[#505050]"><svg class="size-[10px]"><use href="#diamond"/></svg></button>
                            <button aria-label="Next in" class="grid h-4 w-3 place-items-center bg-[#505050]"><svg class="size-[10px]"><use href="#diamond"/></svg></button>
                            <button aria-label="Out tangent" class="ml-[2px] grid h-[34px] w-[42px] place-items-center rounded-xs bg-[#555]"><svg class="h-6 w-[30px] -scale-x-100"><use href="#ease"/></svg></button>
                            <button aria-label="Copy out" class="ml-[2px] grid h-4 w-3 place-items-center bg-[#505050]"><svg class="size-[10px]"><use href="#diamond"/></svg></button>
                        </div>
                    </section>

                    <section class="shrink-0 rounded-xs bg-[#4d4d4d] pb-[10px]">
                        <h2 class="flex items-center gap-[7px] px-[5px] text-[11px] leading-[18px] font-bold text-[#f0f0f0]"><svg class="h-1 w-[5px] text-[#ccc]"><use href="#caret"/></svg>Key Info (Advanced)<svg class="ml-auto size-[6px]"><use href="#grip"/></svg></h2>
                        <div class="mt-[6px] flex pl-[19px]"><span class="w-[76px]">In:</span><span>Out:</span></div>
                        <div id="advanced" class="mt-[2px] grid grid-cols-[52px_24px_56px] gap-y-[3px] pl-[18px] text-[#888]"></div>
                    </section>
                </div>
                <div class="w-3 shrink-0 border-r-4 border-l-2 border-[#3a3a3a]"></div>
            </div>

            <!-- Float Limit Controller dialog -->
            <div role="dialog" aria-label="Float Limit Controller" class="absolute top-[182px] right-36 w-[185px] bg-[#444] pb-3 shadow-[0_2px_6px_rgba(0,0,0,0.6)]">
                <div class="flex h-7 items-center bg-white px-2 text-[11px] text-[#222]">
                    <svg viewBox="0 0 14 14" class="size-[14px]"><path d="M0 0h14v14H0z" fill="#d4eef0"/><path d="M4 3.500c6-2 6 2.500 2.500 3.200 4 .3 3 5.300-3 3.300" fill="none" stroke="#12808a" stroke-width="2.300"/></svg>
                    <span class="ml-[5px]">Float Limit Controller</span>
                    <button aria-label="Close" class="ml-auto"><svg viewBox="0 0 10 10" class="size-[10px]"><path d="M0 0l10 10M10 0L0 10" stroke="#222" stroke-width="1.200"/></svg></button>
                </div>
                <label class="mt-[14px] ml-[11px] flex items-center gap-[3px]"><span class="relative size-[9px]"><input type="checkbox" checked class="absolute inset-0 size-[9px] appearance-none bg-[#666]"><svg class="pointer-events-none absolute inset-0 size-[9px]"><use href="#tick"/></svg></span>Enable</label>
                <fieldset class="mt-[6px] mr-[7px] ml-[10px] h-[77px] border border-[#3a3a3a] pr-[5px]"><legend class="ml-[2px] px-[2px]">Upper Limit</legend>
                    <div class="mt-[10px] flex items-center justify-between pl-6">
                        <label class="flex items-center gap-[3px]"><span class="relative size-[9px]"><input type="checkbox" checked class="absolute inset-0 size-[9px] appearance-none bg-[#666]"><svg class="pointer-events-none absolute inset-0 size-[9px]"><use href="#tick"/></svg></span>Enable</label>
                        <span class="flex h-[15px] w-[66px] items-center bg-[#5e5e5e] pr-[3px]"><input aria-label="Upper limit" value="57295.781" class="min-w-0 flex-1 pl-[3px]"><svg class="h-2 w-[5px]"><use href="#spin"/></svg></span>
                    </div>
                    <div class="mt-[11px] flex items-center justify-end gap-1 whitespace-nowrap">
                        <label for="ubuf">Smoothing Buffer:</label>
                        <span class="flex h-[15px] w-[66px] items-center bg-[#5e5e5e] pr-[3px]"><input id="ubuf" value="0.0" class="min-w-0 flex-1 pl-[3px]"><svg class="h-2 w-[5px]"><use href="#spin"/></svg></span>
                    </div>
                </fieldset>
                <fieldset class="mt-2 mr-[7px] ml-[10px] h-[77px] border border-[#3a3a3a] pr-[5px]"><legend class="ml-[2px] px-[2px]">Lower Limit</legend>
                    <div class="mt-[10px] flex items-center justify-between pl-6">
                        <label class="flex items-center gap-[3px]"><span class="relative size-[9px]"><input type="checkbox" checked class="absolute inset-0 size-[9px] appearance-none bg-[#666]"><svg class="pointer-events-none absolute inset-0 size-[9px]"><use href="#tick"/></svg></span>Enable</label>
                        <span class="flex h-[15px] w-[66px] items-center border border-[#c9c9c9] bg-[#5e5e5e] pr-[2px]"><input aria-label="Lower limit" value="-57295.781" class="mr-[6px] min-w-0 flex-1 bg-[#1878d0] pl-[3px] text-white"><svg class="h-2 w-[5px]"><use href="#spin"/></svg></span>
                    </div>
                    <div class="mt-[11px] flex items-center justify-end gap-1 whitespace-nowrap">
                        <label for="lbuf">Smoothing Buffer:</label>
                        <span class="flex h-[15px] w-[66px] items-center bg-[#5e5e5e] pr-[3px]"><input id="lbuf" value="0.0" class="min-w-0 flex-1 pl-[3px]"><svg class="h-2 w-[5px]"><use href="#spin"/></svg></span>
                    </div>
                </fieldset>
                <!-- text cursor with click highlight -->
                <svg viewBox="0 0 16 16" class="absolute top-[178px] left-[63px] size-4"><circle cx="8" cy="8" r="7" fill="#c4121f" fill-opacity=".85"/><path d="M6 3h2l1 1 1-1h2M9 4v9M6 14h2l1-1 1 1h2" fill="none" stroke="#ddd"/></svg>
            </div>
        </div>
    </div>

    <!-- Status bar -->
    <div class="flex h-[47px] shrink-0 bg-[#444] pr-[2px]">
        <div class="flex w-[94px] flex-col gap-[2px] pt-[2px]">
            <input aria-label="Macro recorder" class="h-[21px] w-full border-2 border-[#eee] bg-[#dcc0c0]">
            <input aria-label="Listener" value="Welcome to MA" class="h-[21px] w-full border-2 border-[#ddd] bg-white pr-1 pl-1 font-['Liberation_Mono',monospace] text-[11px] text-[#222]">
        </div>
        <div class="ml-[3px] flex flex-1 flex-col justify-between border-l border-[#2c2c2c] pt-[7px] pb-[3px] pl-1">
            <p>1 Object Selected</p>
            <p>Click and drag to select and rotate objects</p>
        </div>
        <div class="flex w-[399px] shrink-0 flex-col justify-between pt-[6px]">
            <div class="flex h-4 items-center whitespace-nowrap">
                <button aria-label="Isolate"><svg class="size-4"><use href="#isolate"/></svg></button>
                <button aria-label="Lock selection" class="ml-[10px]"><svg class="size-[14px]"><use href="#lock"/></svg></button>
                <button aria-label="Absolute mode" class="ml-[10px]"><svg class="size-4"><use href="#absrel"/></svg></button>
                <label for="cx" class="ml-[7px] w-[13px]">X:</label><span class="flex h-4 w-[62px] items-center bg-[#5e5e5e] pr-[2px]"><input id="cx" value="0.0" class="min-w-0 flex-1 pl-[2px]"><svg class="h-2 w-[5px]"><use href="#spin"/></svg></span>
                <label for="cy" class="ml-1 w-3">Y:</label><span class="flex h-4 w-[62px] items-center bg-[#5e5e5e] pr-[2px]"><input id="cy" value="-0.0" class="min-w-0 flex-1 pl-[2px]"><svg class="h-2 w-[5px]"><use href="#spin"/></svg></span>
                <label for="cz" class="ml-1 w-3">Z:</label><span class="flex h-4 w-[62px] items-center bg-[#5e5e5e] pr-[2px]"><input id="cz" value="0.0" class="min-w-0 flex-1 pl-[2px]"><svg class="h-2 w-[5px]"><use href="#spin"/></svg></span>
                <span class="ml-[6px]">Grid = 10.0</span>
            </div>
            <button class="ml-[286px] flex items-center gap-[5px] self-start whitespace-nowrap"><span class="grid h-[19px] w-5 place-items-center rounded-xs bg-[#5577ab]"><svg class="size-[14px]"><use href="#tag"/></svg></span>Add Time Tag</button>
        </div>
        <div class="flex shrink-0 gap-[5px] pt-1 pl-[6px]">
            <button aria-label="Set keys" class="grid h-[39px] w-[39px] place-items-center rounded-xs bg-[#5c5c5c]"><svg class="size-8"><use href="#bigkey"/></svg></button>
            <div class="flex w-[43px] flex-col gap-[3px] whitespace-nowrap"><button class="h-[18px] rounded-xs bg-[#5c5c5c]">Auto Key</button><button class="h-[18px] rounded-xs bg-[#5c5c5c]">Set Key</button></div>
            <div class="flex w-[107px] flex-col gap-[3px]">
                <div class="relative"><select aria-label="Key set" class="h-[18px] w-full appearance-none rounded-xs bg-[#5c5c5c] px-1"><option>Selected</option></select><svg class="absolute top-[7px] right-[6px] h-1 w-[6px]"><use href="#caret"/></svg></div>
                <div class="flex"><button aria-label="Tangents" class="relative w-[25px]"><svg class="mx-auto size-4"><use href="#tangent"/></svg><svg class="absolute right-[5px] bottom-0 size-[3px]"><use href="#corner"/></svg></button><button class="h-[18px] flex-1 rounded-xs bg-[#5c5c5c]">Key Filters...</button></div>
            </div>
        </div>
        <div class="flex w-[119px] shrink-0 flex-col gap-[5px] pt-[5px] pl-2">
            <div id="transport" class="flex h-4 items-center"></div>
            <div class="flex items-center"><button aria-label="Key mode"><svg class="size-4"><use href="#keymode"/></svg></button><span class="ml-1 flex h-4 w-[66px] items-center border-l-2 border-[#2b2b2b] bg-[#5e5e5e] pr-[3px]"><input aria-label="Current frame" value="0" class="min-w-0 flex-1 pl-1"><svg class="h-2 w-[5px]"><use href="#spin"/></svg></span><button aria-label="Time configuration" class="ml-[7px]"><svg class="size-[14px]"><use href="#clock"/></svg></button></div>
        </div>
        <div id="nav" class="grid w-[90px] shrink-0 auto-rows-min grid-cols-4 gap-y-[5px] pt-[5px]"></div>
    </div>

    <!-- Grips at the left edge of each bar -->
    <div class="absolute top-[22px] left-[2px] h-[32px] w-1 border-x border-[#222]"></div>
    <div class="absolute top-[58px] left-[2px] h-[34px] w-1 border-x border-[#222]"></div>
    <div class="absolute top-[97px] left-[2px] h-[31px] w-1 border-x border-[#222]"></div>

    <!-- Application button -->
    <div class="absolute top-0 left-0 grid h-4 w-[37px] items-start justify-items-center overflow-hidden border border-[#333] bg-[#666]"><svg viewBox="0 0 14 6" class="h-[6px] w-[14px]"><path d="M0 0h14c-2 5-11 7-14 0z" fill="#1d7f85"/></svg></div>

    <!-- Channel logo -->
    <div class="absolute top-2 left-[10px] w-[67px] border border-black bg-linear-to-b from-white from-60% to-[#ececec] px-[2px] pb-3">
        <svg viewBox="0 0 62 60" class="block w-full">
            <text x="14" y="38" font-family="Liberation Serif" font-size="26" fill="#161616">M</text>
            <text x="33" y="38" font-family="Liberation Serif" font-size="26" fill="#1d9fd8">K</text>
            <path d="M33 38l11-15 5-2" fill="none" stroke="#161616" stroke-width="1.500"/>
            <path d="M18 54c-5-4-5-9-3-14 9 4 24 3 33 0" fill="none" stroke="#161616" stroke-width="2.500"/>
            <path d="M20 54c12 4 24 2 27-4 1-4 0-7-1-9L36 36" fill="none" stroke="#2aa7dd" stroke-width="3"/>
        </svg>
        <div class="rounded-bl-sm bg-[#cc1417] text-center font-['Liberation_Sans',sans-serif] text-[11px] leading-[13px] text-white">ANIMATOR</div>
    </div>
</div>
</div>

<script>
    // "*" after a name marks a flyout, "!" a pressed button, "|" a separator
    const mainBar = ['link', 'unlink', 'bind', '|', { label: 'All' }, 'pick', 'pickname', 'region*', 'crossing', '|', 'move', 'rotate!', 'scale*', 'place*', { label: 'View' }, 'pivot*', '|', 'manip', 'keyb!', '|', 'snap3*', 'snapangle', 'snappct', 'snapspin', '|', 'sets', { label: 'Create Selection Se', wide: true }, '|', 'mirror', 'align*', '|', 'explorer', 'layers', '|', 'ribbon!', 'curve', 'dope', '|', 'schem*', '|', 'rset', 'rframe', 'rprod*'];
    const extraBar = ['teapot*', 'rwin', 'panel1', 'panel2', '|', 'bulb', '|', 'camera', 'halfcam', 'redcam', '|', 'lrect', 'ldome', 'lball', 'mesh', 'lcone', 'sun', 'cream', '|', 'scatter', 'atoms', 'pyramid', 'fuzz', 'grass', 'hair', 'fur', '|', 'ball*', 'locks*', 'proxy', '|', 'doc', 'help'];

    function item(entry, sepClass) {
        if (entry === '|') {
            return `<span class="${sepClass}"><span class="block h-4 w-[2px] bg-[#2b2b2b]"></span></span>`;
        }
        if (entry.label) {
            const width = entry.wide ? 'w-[108px]' : 'w-[62px]';
            return `<span class="relative mr-[1px] ml-[2px] shrink-0 self-start pt-1 ${width}"><select aria-label="${entry.label}" class="block h-[18px] w-full appearance-none overflow-hidden bg-[#5c5c5c] pr-2 pl-[3px]"><option>${entry.label}</option></select><svg class="absolute top-[10px] right-[6px] h-1 w-[6px]"><use href="#caret"/></svg></span>`;
        }
        const name = entry.replace(/[*!]/, '');
        const pressed = entry.endsWith('!') ? 'bg-[#5585c2]' : '';
        const flyout = entry.endsWith('*') ? '<svg class="absolute right-0 bottom-0 size-1"><use href="#corner"/></svg>' : '';
        return `<button aria-label="${name}" class="relative mx-[1px] grid size-7 shrink-0 place-items-center rounded-xs ${pressed}"><svg class="size-7"><use href="#${name}"/></svg>${flyout}</button>`;
    }

    document.getElementById('toolbar').innerHTML = mainBar.map(e => item(e, 'grid w-[6px] shrink-0 place-items-center')).join('');
    document.getElementById('extras').innerHTML = extraBar.map(e => item(e, 'grid w-[7px] shrink-0 place-items-center')).join('');

    document.getElementById('tabs').innerHTML = ['plus', 'mod', 'hier', 'motion', 'disp', 'util'].map(n =>
        `<button aria-label="${n}" class="grid w-7 place-items-center ${n === 'motion' ? 'bg-[#484848]' : 'bg-[#3c3c3c]'}"><svg class="size-5"><use href="#t-${n}"/></svg></button>`).join('');

    const bar = '<span class="mx-[3px] block h-4 w-[2px] bg-[#2b2b2b]"></span>';
    document.getElementById('transport').innerHTML = [
        ['first', 'w-4', ''], bar, ['prev', 'w-4', ''], ['play', 'ml-[5px] w-4', ''], ['prev', 'ml-[6px] w-4', '-scale-x-100'], bar, ['first', 'w-4', '-scale-x-100']
    ].map(b => b === bar ? bar : `<button aria-label="${b[0]}" class="relative ${b[1]}"><svg class="h-4 w-[14px] ${b[2]}"><use href="#${b[0]}"/></svg>${b[0] === 'play' ? '<svg class="absolute right-0 bottom-0 size-[3px]"><use href="#corner"/></svg>' : ''}</button>`).join('');

    document.getElementById('nav').innerHTML = ['zoom', 'zoomall', 'zext', 'zextall', 'fov', 'pan', 'orbit', 'maxi'].map((n, i) =>
        `<button aria-label="${n}" class="relative grid h-4 place-items-center"><svg class="size-[14px]"><use href="#${n}"/></svg>${i > 1 && i < 7 ? '<svg class="absolute right-0 bottom-0 size-[3px]"><use href="#corner"/></svg>' : ''}</button>`).join('');

    const field = (label) => `<span class="flex h-[14px] w-[52px] items-center bg-[#555] pr-1"><input aria-label="${label}" value="0.0" class="min-w-0 flex-1 px-[2px]"><svg class="h-2 w-[5px]"><use href="#spin"/></svg></span>`;
    document.getElementById('advanced').innerHTML =
        field('In') + '<svg viewBox="0 0 10 10" class="m-auto size-[9px]"><path d="M2 4h6v5H2zM3 4V1h4v3" fill="none" stroke="#2c2c2c" stroke-width="1.500"/></svg>' + field('Out') + field('In 2') + '<span></span>' + field('Out 2');

    // Track bar: one tick per frame, a label every ten
    let track = '<rect x="-3" y="1" width="7" height="22" fill="#8d851f"/>';
    for (let f = 0; f <= 100; f++) {
        const major = f % 10 === 0;
        if (f) track += `<line x1="${f}%" x2="${f}%" y1="0" y2="${major ? 14 : 11}" stroke="#777"/>`;
        if (major) track += `<text x="${f}%" y="21" text-anchor="middle" fill="${f ? '#b8b8b8' : '#f0e84a'}">${f}</text>`;
    }
    document.getElementById('track').innerHTML = track;
</script>
</body>
</html>
